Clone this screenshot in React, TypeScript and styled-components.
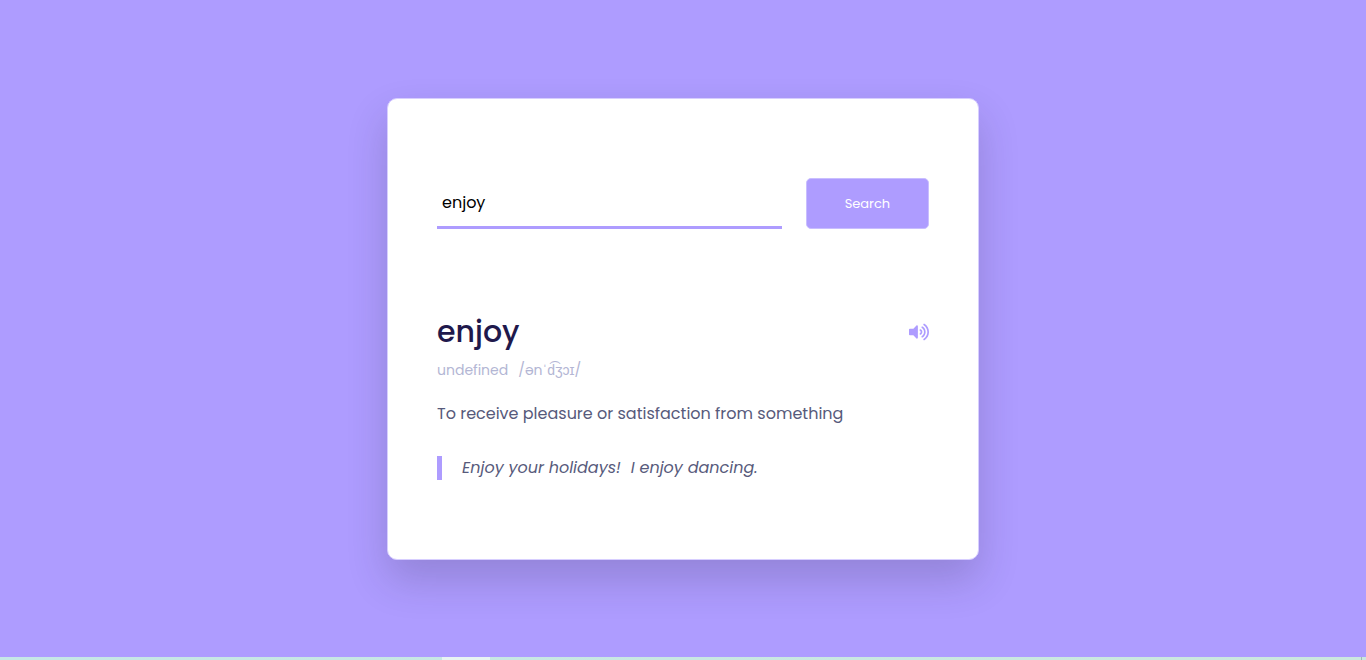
import React, { useState } from 'react';
import styled, { createGlobalStyle } from 'styled-components';
import { FaVolumeUp } from 'react-icons/fa';

const accent = '#ae9cff';

const GlobalStyle = createGlobalStyle`
  *, *::before, *::after {
    box-sizing: border-box;
    margin: 0;
    padding: 0;
  }
  body, input, button {
    font-family: Poppins, "Liberation Sans", sans-serif;
  }
`;

const Page = styled.div`
  min-height: 100vh;
  display: flex;
  flex-direction: column;
  background: ${accent};
`;

const Main = styled.main`
  flex: 1;
  display: flex;
  align-items: center;
  justify-content: center;
`;

const Card = styled.section`
  width: 90%;
  max-width: 592px;
  padding: 79px 49px;
  background: #fff;
  border: 1px solid #d7ceff;
  border-radius: 10px;
  box-shadow: 0 20px 40px rgba(38, 33, 61, 0.2);
`;

const SearchForm = styled.form`
  display: grid;
  grid-template-columns: 14fr 5fr;
  column-gap: 24px;
`;

const SearchInput = styled.input`
  width: 100%;
  min-width: 0;
  height: 51px;
  padding: 2px 5px 0;
  border: none;
  border-bottom: 3px solid ${accent};
  outline: none;
  background: transparent;
  color: #000;
  font-size: 16px;
`;

const SearchButton = styled.button`
  height: 51px;
  padding-top: 1px;
  border: 1px solid #c9beff;
  border-radius: 5px;
  background: ${accent};
  color: #fff;
  font-size: 13px;
  cursor: pointer;
`;

const WordRow = styled.div`
  display: flex;
  align-items: center;
  justify-content: space-between;
  margin-top: 80px;
`;

const Word = styled.h1`
  color: #1f194c;
  font-size: 30px;
  font-weight: 500;
  line-height: 46px;
`;

const SoundButton = styled.button`
  display: flex;
  border: none;
  background: transparent;
  color: ${accent};
  font-size: 20px;
  cursor: pointer;
`;

const Details = styled.div`
  display: flex;
  gap: 10px;
  margin-top: 3px;
  color: #b3b6d4;
  font-size: 14px;
  line-height: 24px;
`;

const Meaning = styled.p`
  margin-top: 20px;
  color: #575a7b;
  font-size: 16px;
  line-height: 24px;
`;

const Example = styled.blockquote`
  display: flex;
  gap: 10px;
  margin-top: 30px;
  padding-left: 20px;
  border-left: 5px solid ${accent};
  color: #575a7b;
  font-size: 16px;
  font-style: italic;
  line-height: 24px;
`;

const BottomEdge = styled.footer`
  display: flex;
  height: 3px;
  background: linear-gradient(90deg, #c5e7e7, #cbe8df);
`;

const ActiveTab = styled.div`
  width: 48px;
  margin-left: 442px;
  background: #e8f4f3;
`;

const EdgeLine = styled.div`
  width: 1px;
  margin-left: auto;
  margin-right: 4px;
  background: #9fb9b4;
`;

export default function App() {
  const [query, setQuery] = useState('enjoy');

  return (
    <Page>
      <GlobalStyle />
      <Main>
        <Card>
          <SearchForm onSubmit={(event) => event.preventDefault()}>
            <SearchInput
              type="text"
              aria-label="Word"
              value={query}
              onChange={(event) => setQuery(event.target.value)}
            />
            <SearchButton type="submit">Search</SearchButton>
          </SearchForm>
          <WordRow>
            <Word>enjoy</Word>
            <SoundButton type="button" aria-label="Play pronunciation">
              <FaVolumeUp />
            </SoundButton>
          </WordRow>
          <Details>
            <span>undefined</span>
            <span>/ənˈd͡ʒɔɪ/</span>
          </Details>
          <Meaning>To receive pleasure or satisfaction from something</Meaning>
          <Example>
            <span>Enjoy your holidays!</span>
            <span>I enjoy dancing.</span>
          </Example>
        </Card>
      </Main>
      <BottomEdge>
        <ActiveTab />
        <EdgeLine />
      </BottomEdge>
    </Page>
  );
}
